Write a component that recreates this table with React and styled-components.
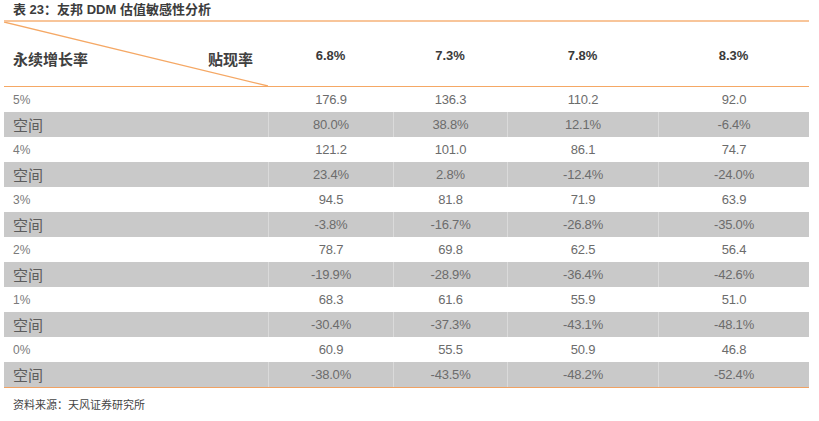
import { Fragment } from "react"
import styled, { createGlobalStyle } from "styled-components"

const GlobalStyle = createGlobalStyle`
    *, *::before, *::after {
        box-sizing: border-box;
    }
    body {
        margin: 0;
        background: #fff;
        font-family: "Liberation Sans", "Noto Sans CJK SC", sans-serif;
    }
`

const Page = styled.div`
    width: 819px;
    height: 421px;
    padding-left: 4px;
`

const Title = styled.div`
    height: 20px;
    padding-left: 9px;
    font-size: 13px;
    font-weight: bold;
    color: #3c3c3c;
    line-height: 20px;
`

const Table = styled.div`
    width: 805px;
    display: grid;
    grid-template-columns: 264px 125px 114px 151px 151px;
    border-top: 2px solid #f8c59a;
    border-bottom: 1.5px solid #f0a263;
`

const Corner = styled.div`
    position: relative;
    height: 65px;
    display: flex;
    justify-content: space-between;
    align-items: flex-end;
    padding: 0 15px 17px 9px;
    font-size: 15px;
    font-weight: bold;
    color: #404040;
    border-bottom: 1.5px solid #f5a865;
`

const Diagonal = styled.svg`
    position: absolute;
    left: 0;
    top: 0;
    width: 100%;
    height: 100%;
    pointer-events: none;
`

const HeadCell = styled.div`
    height: 65px;
    display: flex;
    align-items: center;
    justify-content: center;
    padding-top: 3px;
    font-size: 13px;
    font-weight: bold;
    color: #3a3a3a;
    border-bottom: 1.5px solid #f5a865;
`

const Cell = styled.div`
    height: 25px;
    display: flex;
    align-items: center;
    justify-content: ${p => (p.$label ? "flex-start" : "center")};
    padding-left: ${p => (p.$label ? "9px" : "0")};
    background: ${p => (p.$shade ? "#c9c9c9" : "#fff")};
    border-left: ${p => (p.$label ? "none" : p.$shade ? "1px solid #dadada" : "1px solid #fff")};
    font-size: ${p => (p.$label && p.$shade ? "15px" : p.$label ? "12px" : "13px")};
    color: ${p => (p.$label && p.$shade ? "#5c5c5c" : p.$label ? "#7a7a7a" : "#6c6c6c")};
    letter-spacing: ${p => (p.$label ? "0" : "-0.2px")};
`

const Source = styled.div`
    padding: 8px 0 0 9px;
    font-size: 11px;
    color: #444;
`

const rows = [
    ["5%", ["176.9", "136.3", "110.2", "92.0"], ["80.0%", "38.8%", "12.1%", "-6.4%"]],
    ["4%", ["121.2", "101.0", "86.1", "74.7"], ["23.4%", "2.8%", "-12.4%", "-24.0%"]],
    ["3%", ["94.5", "81.8", "71.9", "63.9"], ["-3.8%", "-16.7%", "-26.8%", "-35.0%"]],
    ["2%", ["78.7", "69.8", "62.5", "56.4"], ["-19.9%", "-28.9%", "-36.4%", "-42.6%"]],
    ["1%", ["68.3", "61.6", "55.9", "51.0"], ["-30.4%", "-37.3%", "-43.1%", "-48.1%"]],
    ["0%", ["60.9", "55.5", "50.9", "46.8"], ["-38.0%", "-43.5%", "-48.2%", "-52.4%"]],
]

const rates = ["6.8%", "7.3%", "7.8%", "8.3%"]

const App = () => {
    return (
        <Page>
            <GlobalStyle />
            <Title>表 23：友邦 DDM 估值敏感性分析</Title>
            <Table>
                <Corner>
                    <Diagonal viewBox="0 0 264 64" preserveAspectRatio="none">
                        <line x1="0" y1="0" x2="264" y2="64" stroke="#f5a865" strokeWidth="1.3" />
                    </Diagonal>
                    <span>永续增长率</span>
                    <span>贴现率</span>
                </Corner>
                {rates.map(r => (
                    <HeadCell key={r}>{r}</HeadCell>
                ))}
                {rows.map(([growth, values, spaces]) => (
                    <Fragment key={growth}>
                        <Cell $label>{growth}</Cell>
                        {values.map((v, i) => (
                            <Cell key={"v" + i}>{v}</Cell>
                        ))}
                        <Cell $label $shade>空间</Cell>
                        {spaces.map((s, i) => (
                            <Cell key={"s" + i} $shade>{s}</Cell>
                        ))}
                    </Fragment>
                ))}
            </Table>
            <Source>资料来源：天风证券研究所</Source>
        </Page>
    )
}

export default App
